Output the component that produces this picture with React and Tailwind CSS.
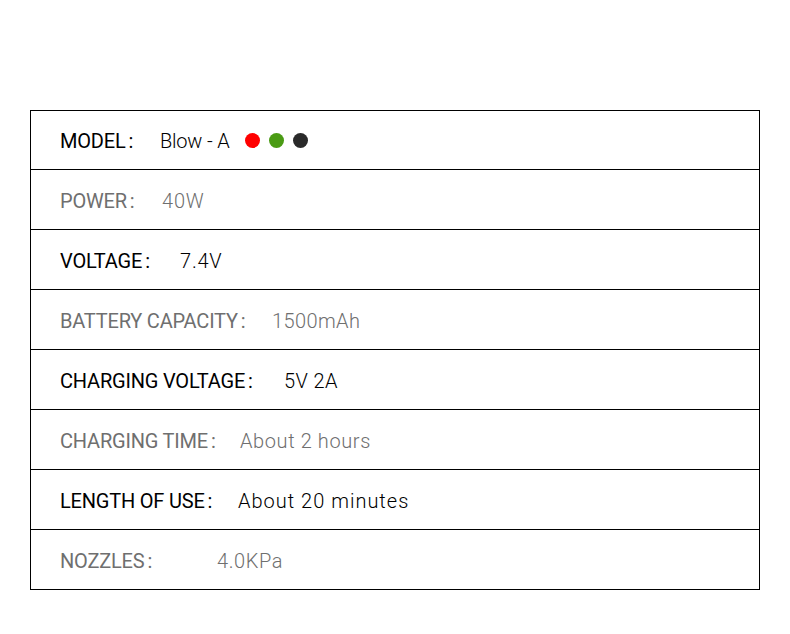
import React from "react";

const rows = [
  { label: "MODEL", value: "Blow - A", dark: true, w: "w-[100px]", h: "h-[59px]", dots: true, vt: "tracking-[-0.01em]" },
  { label: "POWER", value: "40W", dark: false, w: "w-[102px]", h: "h-[60px]", vt: "tracking-[0.04em]" },
  { label: "VOLTAGE", value: "7.4V", dark: true, w: "w-[120px]", h: "h-[60px]", vt: "tracking-[0.04em]" },
  { label: "BATTERY CAPACITY", value: "1500mAh", dark: false, w: "w-[212px]", h: "h-[60px]", vt: "tracking-[0.02em]" },
  { label: "CHARGING VOLTAGE", value: "5V 2A", dark: true, w: "w-[224px]", h: "h-[60px]", vt: "tracking-[0.02em]" },
  { label: "CHARGING TIME", value: "About 2 hours", dark: false, w: "w-[180px]", h: "h-[60px]", vt: "tracking-[0.03em]" },
  { label: "LENGTH OF USE", value: "About 20 minutes", dark: true, w: "w-[178px]", h: "h-[60px]", vt: "tracking-[0.05em]" },
  { label: "NOZZLES", value: "4.0KPa", dark: false, w: "w-[157px]", h: "h-[60px]", vt: "tracking-[0.03em]" },
];

export default function App() {
  return (
    <div className="w-[790px] h-[634px] bg-white pt-[110px] pl-[30px]" style={{ fontFamily: "Roboto, 'Liberation Sans', sans-serif" }}>
      <div className="w-[730px] border-t border-l border-r border-black">
        {rows.map((r) => (
          <div
            key={r.label}
            className={`${r.h} border-b border-black flex items-center pl-[29px] pt-[2px] text-[20px] ${r.dark ? "text-black" : "text-[#6f6f6f]"}`}
          >
            <span className={`${r.w} shrink-0 tracking-[-0.01em]`}>
              {r.label}
              <span className="ml-[3px]">:</span>
            </span>
            <span className={`font-light ${r.vt}`}>{r.value}</span>
            {r.dots && (
              <div className="flex items-center gap-[9px] ml-[16px] -mt-[2px]">
                <span className="w-[15px] h-[15px] rounded-full bg-[#ff0000]" />
                <span className="w-[15px] h-[15px] rounded-full bg-[#4a9b14]" />
                <span className="w-[15px] h-[15px] rounded-full bg-[#2a2a2a]" />
              </div>
            )}
          </div>
        ))}
      </div>
    </div>
  );
}
